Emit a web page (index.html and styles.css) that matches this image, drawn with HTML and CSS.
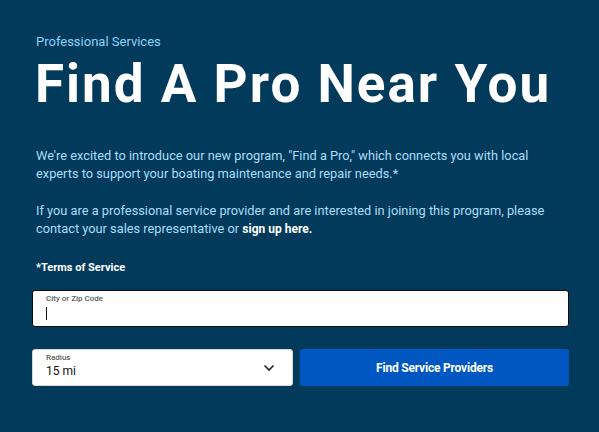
FILE: index.html
```html
<!DOCTYPE html>
<html>
<head>
<meta charset="utf-8">
<link rel="stylesheet" href="styles.css">
</head>
<body>
<main class="pro">
  <div class="intro">
    <p class="eyebrow">Professional Services</p>
    <h1 class="title">Find A Pro Near You</h1>
    <p class="copy">We're excited to introduce our new program, "Find a Pro," which connects you with local experts to support your boating maintenance and repair needs.*</p>
    <p class="copy">If you are a professional service provider and are interested in joining this program, please contact your sales representative or <a class="link" href="#">sign up here.</a></p>
    <p class="terms">*Terms of Service</p>
  </div>
  <div class="field field-city">
    <span class="label">City or Zip Code</span>
    <span class="caret"></span>
  </div>
  <div class="row">
    <div class="field field-radius">
      <div class="select-text">
        <span class="label">Radius</span>
        <span class="value">15 mi</span>
      </div>
      <svg class="chev" width="12" height="8" viewBox="0 0 12 8"><path d="M1.5 1.5 L6 6 L10.5 1.5" fill="none" stroke="#222" stroke-width="1.6"/></svg>
    </div>
    <button class="btn">Find Service Providers</button>
  </div>
</main>
</body>
</html>
```

FILE: styles.css
```css
html, body {
  margin: 0;
  padding: 0;
  background: #023a5c;
  height: 100%;
}
body {
  font-family: Roboto, "Liberation Sans", Arial, sans-serif;
}
.pro {
  padding: 34px 30px 0 32px;
}
.intro {
  padding: 0 4px;
}
.eyebrow {
  margin: 0;
  font-size: 13px;
  line-height: 16px;
  color: #8ed3f7;
}
.title {
  margin: 8px 0 0 -1px;
  font-size: 53px;
  line-height: 52px;
  font-weight: 700;
  color: #ffffff;
  letter-spacing: 2px;
  white-space: nowrap;
}
.copy {
  margin: 37px 0 0;
  font-size: 12.8px;
  line-height: 18px;
  color: #a9def8;
}
.copy + .copy {
  margin-top: 19px;
}
.link {
  color: #ffffff;
  font-weight: 700;
  font-size: 12px;
  text-decoration: none;
}
.terms {
  margin: 23px 0 0;
  font-size: 11px;
  line-height: 14px;
  font-weight: 700;
  color: #ffffff;
}
.field {
  background: #ffffff;
  border-radius: 3px;
  box-sizing: border-box;
}
.field-city {
  margin-top: 15px;
  height: 37px;
  border: 1px solid #0b0b0b;
  padding: 3px 13px 0;
  display: flex;
  flex-direction: column;
}
.label {
  font-size: 8px;
  line-height: 10px;
  color: #5a5a5a;
  font-weight: 500;
}
.caret {
  margin-top: 3px;
  width: 1px;
  height: 13px;
  background: #111111;
}
.row {
  margin-top: 22px;
  display: flex;
  gap: 7px;
}
.field-radius {
  flex: 0 0 261px;
  height: 37px;
  border: 1px solid #d8d8d8;
  padding: 3px 17px 0 13px;
  display: flex;
  align-items: center;
  justify-content: space-between;
}
.select-text {
  display: flex;
  flex-direction: column;
  align-self: flex-start;
}
.value {
  font-size: 12px;
  line-height: 14px;
  color: #111111;
  margin-top: 1px;
}
.chev {
  margin-top: -2px;
}
.btn {
  flex: 1;
  height: 37px;
  border: 0;
  border-radius: 3px;
  background: #0057c2;
  color: #ffffff;
  font-family: Roboto, "Liberation Sans", Arial, sans-serif;
  font-size: 12px;
  font-weight: 700;
  letter-spacing: -0.2px;
  padding: 0;
}
```
